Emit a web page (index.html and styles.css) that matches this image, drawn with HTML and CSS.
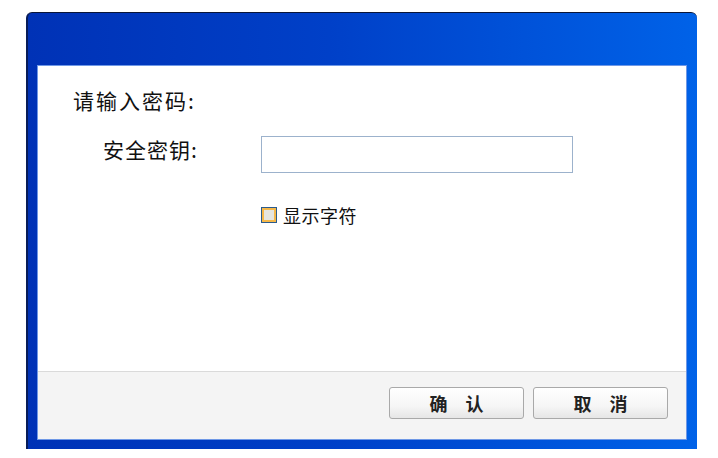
FILE: index.html
```html
<!DOCTYPE html>
<html lang="zh-CN">
<head>
    <meta charset="UTF-8">
    <title>请输入密码</title>
    <link rel="stylesheet" href="styles.css">
</head>
<body>
    <div class="window">
        <div class="titlebar"></div>
        <div class="inner">
            <!-- Form area -->
            <div class="content">
                <div class="heading">请输入密码:</div>
                <div class="field">
                    <label class="label" for="key">安全密钥:</label>
                    <input class="input" id="key" type="password">
                </div>
                <div class="check-row">
                    <span class="checkbox"></span>
                    <span class="check-text">显示字符</span>
                </div>
            </div>

            <!-- Buttons -->
            <div class="footer">
                <button class="button">确认</button>
                <button class="button">取消</button>
            </div>
        </div>
    </div>
</body>
</html>
```

FILE: styles.css
```css
* {
    margin: 0;
    padding: 0;
    box-sizing: border-box;
}

body {
    font-family: "Noto Sans CJK SC", "Noto Sans", sans-serif;
    background: #fff;
    color: #111;
}

.window {
    margin: 12px 0 0 26px;
    width: 671px;
    height: 437px;
    display: flex;
    flex-direction: column;
    padding: 0 10px 9px 9px;
    background: linear-gradient(90deg, #0032b6 0%, #0040c8 45%, #0062e8 100%);
    border-top: 1px solid #0a1638;
    border-left: 2px solid #081c58;
    border-radius: 6px 6px 0 0;
}

.titlebar {
    height: 52px;
    flex: none;
}

.inner {
    flex: 1;
    display: flex;
    flex-direction: column;
    border: 1px solid #6f98e6;
    background: #f4f4f4;
}

.content {
    height: 305px;
    background: #fff;
    padding: 21px 0 0 35px;
}

.heading {
    font-size: 21px;
    line-height: 26px;
    letter-spacing: 2px;
}

.field {
    display: flex;
    align-items: flex-start;
    margin-top: 23px;
    padding-left: 30px;
}

.label {
    width: 158px;
    font-size: 21px;
    line-height: 26px;
    letter-spacing: 1px;
}

.input {
    width: 312px;
    height: 37px;
    border: 1px solid #9cb2cc;
    background: #fff;
    outline: none;
}

.check-row {
    display: flex;
    align-items: center;
    height: 22px;
    margin: 31px 0 0 188px;
}

.checkbox {
    width: 16px;
    height: 16px;
    border: 1px solid #2b5b8c;
    background: #e6e6e0;
    box-shadow: inset 0 0 0 2px #f5b84a;
}

.check-text {
    margin-left: 6px;
    font-size: 18px;
    line-height: 22px;
    letter-spacing: 0.5px;
}

.footer {
    flex: 1;
    display: flex;
    justify-content: flex-end;
    align-items: flex-start;
    gap: 9px;
    padding: 15px 18px 0 0;
    border-top: 1px solid #dadada;
}

.button {
    width: 135px;
    height: 32px;
    border: 1px solid #a9a9a9;
    border-radius: 3px;
    background: linear-gradient(#ffffff 0%, #f6f6f6 60%, #e6e6e6 100%);
    font-family: "Noto Sans CJK SC", sans-serif;
    font-size: 18px;
    font-weight: bold;
    color: #222;
    letter-spacing: 18px;
    padding-left: 18px;
}
```
